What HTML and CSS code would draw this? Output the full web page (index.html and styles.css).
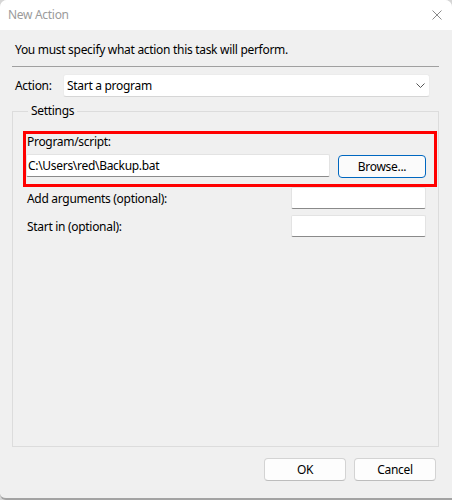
FILE: index.html
```html
<!DOCTYPE html>
<html>
<head>
<meta charset="utf-8">
<link rel="stylesheet" href="styles.css">
</head>
<body>
<div class="window">
  <div class="titlebar">
    <span class="title">New Action</span>
    <svg class="close" width="10" height="10" viewBox="0 0 10 10"><path d="M0.5 0.5L9.5 9.5M9.5 0.5L0.5 9.5" stroke="#8a8a8a" stroke-width="1" fill="none"/></svg>
  </div>
  <div class="main">
    <p class="intro">You must specify what action this task will perform.</p>
    <div class="sep"></div>
    <div class="action-row">
      <span class="action-label">Action:</span>
      <div class="select">
        <span>Start a program</span>
        <svg class="chev" width="9" height="5" viewBox="0 0 9 5"><path d="M0.5 0.5L4.5 4.5L8.5 0.5" stroke="#555" stroke-width="1" fill="none"/></svg>
      </div>
    </div>
    <fieldset class="group">
      <legend>Settings</legend>
      <div class="highlight">
        <div class="prog-label">Program/script:</div>
        <div class="prog-row">
          <div class="input wide">C:\Users\red\Backup.bat</div>
          <div class="btn browse">Browse...</div>
        </div>
      </div>
      <div class="opt-row"><span>Add arguments (optional):</span><div class="input small"></div></div>
      <div class="opt-row second"><span>Start in (optional):</span><div class="input small"></div></div>
    </fieldset>
    <div class="footer">
      <div class="btn">OK</div>
      <div class="btn">Cancel</div>
    </div>
  </div>
</div>
</body>
</html>
```
FILE: styles.css
```css
* { box-sizing: border-box; }
html, body { margin: 0; padding: 0; }
body {
  width: 452px;
  height: 500px;
  background: #d6d6d6;
  font-family: "Noto Sans", "Open Sans", sans-serif;
  font-size: 12px;
  letter-spacing: -0.3px;
  color: #000;
  overflow: hidden;
}
.window {
  width: 452px;
  height: 500px;
  display: flex;
  flex-direction: column;
  background: #f0f0f0;
  border-radius: 7px 7px 0 6px;
  border-bottom: 2px solid #a3a3a3;
  overflow: hidden;
}
.titlebar {
  height: 30px;
  flex: none;
  background: #fff;
  display: flex;
  align-items: center;
  justify-content: space-between;
  padding: 0 10px 0 8px;
}
.title { color: #9b9b9b; line-height: 16px; }
.close { display: block; margin-top: -1px; }
.main {
  flex: 1;
  display: flex;
  flex-direction: column;
  padding: 0 13px 0 12px;
}
.intro {
  margin: 12px 0 0 3px;
  line-height: 16px;
}
.sep {
  margin-top: 8px;
  height: 1px;
  background: #a0a0a0;
}
.action-row {
  margin-top: 7px;
  display: flex;
  align-items: center;
  height: 23px;
}
.action-label {
  width: 51px;
  padding-left: 3px;
}
.select {
  width: 367px;
  height: 23px;
  background: #fff;
  border: 1px solid #ececec;
  border-bottom-color: #d6d6d6;
  border-radius: 3px;
  display: flex;
  align-items: center;
  justify-content: space-between;
  padding: 0 4px 0 3px;
}
.chev { display: block; }
.group {
  margin: 6px 0 0 0;
  padding: 12px 1px 0 10px;
  border: 1px solid #dcdcdc;
  height: 344px;
  min-width: 0;
}
.group legend {
  margin-left: 5px;
  padding: 0 3px;
  line-height: 16px;
}
.highlight {
  border: 3px solid #ff0000;
  padding: 0 8px 0 0;
  height: 56px;
}
.prog-label {
  padding-left: 1px;
  line-height: 16px;
}
.prog-row {
  margin-top: 4px;
  display: flex;
  align-items: flex-start;
  justify-content: space-between;
}
.input {
  background: #fff;
  border: 1px solid #e3e3e3;
  border-bottom-color: #8a8a8a;
  border-radius: 2px;
  height: 23px;
  display: flex;
  align-items: center;
  padding-left: 1px;
}
.input.wide { width: 304px; }
.input.small { width: 135px; height: 22px; }
.btn {
  width: 82px;
  height: 23px;
  display: flex;
  align-items: center;
  justify-content: center;
  background: #fdfdfd;
  border: 1px solid #d3d3d3;
  border-bottom-color: #bdbdbd;
  border-radius: 4px;
}
.btn.browse {
  width: 88px;
  margin-top: 1px;
  border: 1px solid #0067c0;
  background: #fbfbfb;
}
.opt-row {
  display: flex;
  align-items: center;
  justify-content: space-between;
  height: 22px;
  padding: 0 11px 0 4px;
}
.opt-row.second { margin-top: 6px; }
.footer {
  margin-top: 11px;
  display: flex;
  justify-content: flex-end;
  gap: 8px;
  padding-right: 3px;
}
```
